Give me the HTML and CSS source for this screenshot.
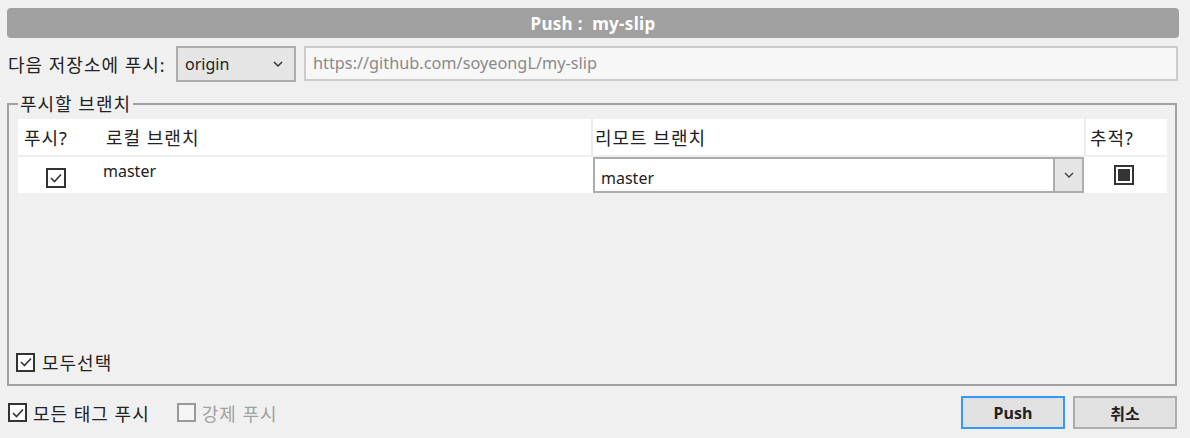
FILE: index.html
```html
<!DOCTYPE html>
<html lang="ko">
<head>
    <meta charset="UTF-8">
    <title>Push : my-slip</title>
    <link rel="stylesheet" href="styles.css">
</head>
<body>
    <div class="dialog">
        <div class="title">Push :&nbsp; my-slip</div>

        <div class="repo-row">
            <span class="label">다음 저장소에 푸시:</span>
            <div class="select">
                <span>origin</span>
                <svg class="chev" width="12" height="8" viewBox="0 0 12 8"><polyline points="2,2 6,6 10,2" fill="none" stroke="#333" stroke-width="1.5"/></svg>
            </div>
            <div class="url">https://github.com/soyeongL/my-slip</div>
        </div>

        <fieldset class="branches">
            <legend>푸시할 브랜치</legend>
            <div class="grid">
                <div class="head c-push">푸시?</div>
                <div class="head c-local">로컬 브랜치</div>
                <div class="head c-remote">리모트 브랜치</div>
                <div class="head c-track">추적?</div>

                <div class="cell c-push">
                    <span class="box checked">
                        <svg width="14" height="12" viewBox="0 0 14 12"><polyline points="2,6 5.5,9.5 12,2.5" fill="none" stroke="#333" stroke-width="1.6"/></svg>
                    </span>
                </div>
                <div class="cell c-local top">master</div>
                <div class="cell c-remote">
                    <div class="combo">
                        <span class="combo-text">master</span>
                        <span class="combo-btn">
                            <svg width="12" height="8" viewBox="0 0 12 8"><polyline points="2,2 6,6 10,2" fill="none" stroke="#444" stroke-width="1.4"/></svg>
                        </span>
                    </div>
                </div>
                <div class="cell c-track">
                    <span class="box partial"><span class="fill"></span></span>
                </div>
            </div>

            <div class="select-all">
                <span class="box checked small">
                    <svg width="14" height="12" viewBox="0 0 14 12"><polyline points="2,6 5.5,9.5 12,2.5" fill="none" stroke="#333" stroke-width="1.6"/></svg>
                </span>
                <span>모두선택</span>
            </div>
        </fieldset>

        <div class="footer">
            <label class="opt">
                <span class="box checked small">
                    <svg width="14" height="12" viewBox="0 0 14 12"><polyline points="2,6 5.5,9.5 12,2.5" fill="none" stroke="#333" stroke-width="1.6"/></svg>
                </span>
                모든 태그 푸시
            </label>
            <label class="opt disabled">
                <span class="box small off"></span>
                강제 푸시
            </label>
            <div class="spacer"></div>
            <button class="btn primary">Push</button>
            <button class="btn">취소</button>
        </div>
    </div>
</body>
</html>
```

FILE: styles.css
```css
body {
    margin: 0;
    background-color: #f0f0f0;
    font-family: "Segoe UI", "Noto Sans", "Noto Sans CJK KR", sans-serif;
    font-size: 18px;
    letter-spacing: 1px;
    color: #222;
}
.dialog {
    padding: 8px 11px 0 7px;
}
.title {
    height: 30px;
    background: #a0a0a0;
    border-radius: 4px;
    color: #fff;
    font-weight: bold;
    font-size: 17px;
    letter-spacing: 0.3px;
    display: flex;
    align-items: center;
    justify-content: center;
}
.repo-row {
    display: flex;
    align-items: center;
    margin-top: 8px;
    height: 36px;
}
.label {
    padding-left: 1px;
    width: 168px;
    white-space: nowrap;
}
.select {
    border: 2px solid #adadad;
    background: #e5e5e5;
    display: flex;
    align-items: center;
    justify-content: space-between;
    padding: 0 10px 0 7px;
    box-sizing: border-box;
    width: 120px;
    height: 36px;
    font-size: 16px;
    letter-spacing: 0;
}
.url {
    flex: 1;
    margin-left: 8px;
    margin-right: 1px;
    height: 35px;
    border: 2px solid #cccccc;
    background: #f7f7f7;
    color: #8a8a8a;
    box-sizing: border-box;
    display: flex;
    align-items: center;
    padding-left: 7px;
    font-size: 16.3px;
    letter-spacing: 0;
    margin-top: -2px;
}
.branches {
    margin: 14px 2px 0 0;
    border: 2px solid #a0a0a0;
    padding: 7px 8px 10px 9px;
    height: 290px;
    box-sizing: border-box;
    display: flex;
    flex-direction: column;
}
.branches legend {
    padding: 0 2px;
    line-height: 16px;
}
.grid {
    display: grid;
    grid-template-columns: 76px 497px 2px 491px 2px 81px;
    grid-template-rows: 36px 36px;
    row-gap: 2px;
}
.head, .cell {
    background: #fff;
    display: flex;
    align-items: center;
}
.head {
    border-right: 2px solid #ececec;
}
.head.c-push { grid-column: 1; padding-left: 6px; border-right: none; }
.head.c-local { grid-column: 2 / 4; padding-left: 12px; }
.head.c-remote { grid-column: 4 / 6; padding-left: 2px; }
.head.c-track { grid-column: 6; padding-left: 4px; border-right: none; }
.cell.c-push { grid-column: 1; padding-left: 28px; }
.cell.c-local {
    grid-column: 2 / 4;
    padding-left: 9px;
    font-size: 16px;
    letter-spacing: 0;
}
.cell.c-remote { grid-column: 4 / 6; }
.cell.c-track { grid-column: 6; padding-left: 28px; }
.top { align-items: flex-start; padding-top: 3px; box-sizing: border-box; }
.box {
    width: 20px;
    height: 20px;
    border: 2px solid #333;
    box-sizing: border-box;
    display: inline-flex;
    align-items: center;
    justify-content: center;
    background: #fff;
    flex-shrink: 0;
}
.box.small { width: 19px; height: 19px; }
.box.off { border-color: #9a9a9a; background: #f5f5f5; }
.cell.c-push .box { margin-top: 5px; }
.cell.c-track .box { margin-top: -1px; }
.fill {
    width: 12px;
    height: 12px;
    background: #333;
}
.combo {
    width: 491px;
    height: 36px;
    border: 2px solid #adadad;
    box-sizing: border-box;
    display: flex;
    align-items: stretch;
    background: #fff;
}
.combo-text {
    flex: 1;
    display: flex;
    align-items: center;
    padding-left: 6px;
    padding-top: 5px;
    font-size: 16px;
    letter-spacing: 0;
}
.combo-btn {
    width: 27px;
    background: #e5e5e5;
    border-left: 2px solid #adadad;
    display: flex;
    align-items: center;
    justify-content: center;
}
.select-all {
    margin-top: auto;
    display: flex;
    align-items: center;
    gap: 7px;
    margin-left: -2px;
    margin-bottom: -1px;
}
.footer {
    display: flex;
    align-items: center;
    margin-top: 10px;
    margin-right: 2px;
    height: 33px;
}
.opt {
    display: flex;
    align-items: center;
    gap: 6px;
    margin-left: 1px;
    margin-right: 27px;
}
.opt.disabled { color: #a0a0a0; margin-left: 0; }
.spacer { flex: 1; }
.btn {
    width: 104px;
    height: 33px;
    border: 2px solid #adadad;
    background: #e1e1e1;
    font-family: "Segoe UI", "Noto Sans", "Noto Sans CJK KR", sans-serif;
    font-weight: bold;
    font-size: 16px;
    color: #222;
    margin-left: 8px;
}
.btn.primary { border-color: #3399ff; }
```
